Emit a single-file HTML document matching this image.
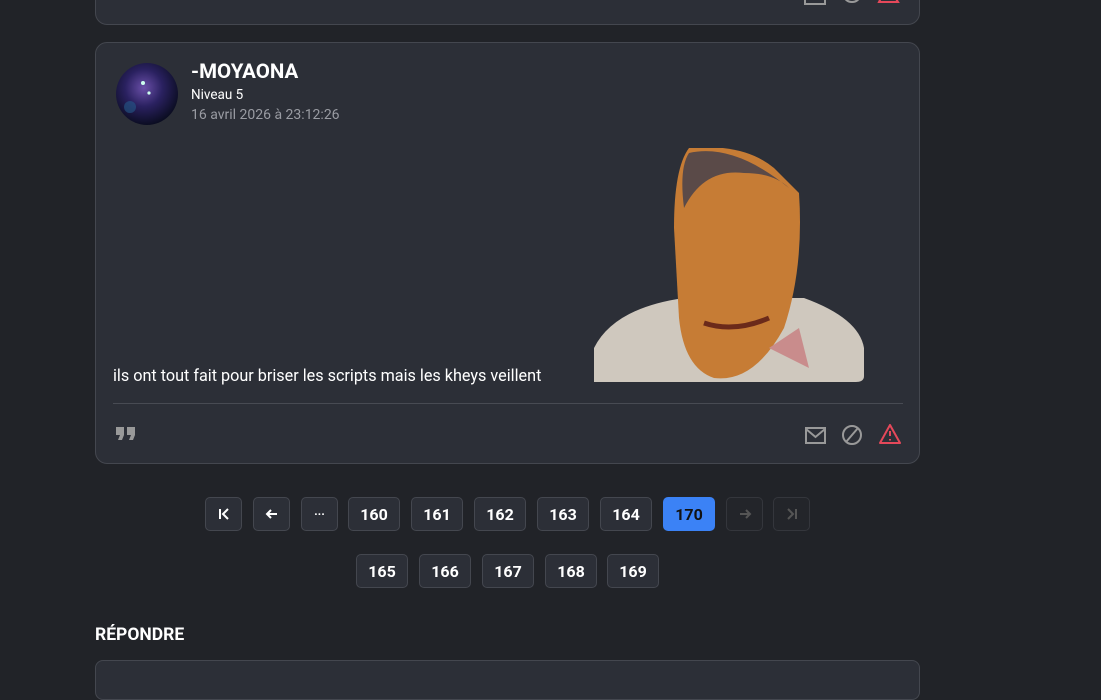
<!DOCTYPE html>
<html><head><meta charset="utf-8"><style>
body{margin:0;width:1101px;height:665px;overflow:hidden;background:#212328;font-family:"Roboto","Liberation Sans",sans-serif;color:#fff;position:relative}
.card{position:absolute;left:95px;width:825px;background:#2c2f37;border:1px solid #44474f;border-radius:12px;box-sizing:border-box}
.pg{position:absolute;height:34px;box-sizing:border-box;border:1px solid #44474f;border-radius:5px;background:#2c2f37;color:#fff;font-weight:bold;font-size:16px;display:flex;align-items:center;justify-content:center}
.dis{background:#23252a;color:#555;border-color:#34363c}
.ic{position:absolute}
</style></head><body>
<div class="card" style="top:-20px;height:45px"></div>
<svg class="ic" style="left:804px;top:-6px" width="100" height="14"><rect x="1" y="0" width="20" height="10" fill="none" stroke="#999" stroke-width="2"/><circle cx="48" cy="-1" r="9" fill="none" stroke="#999" stroke-width="2"/><path d="M79 0 L89 0 L94 8 L75 8 Z" fill="none" stroke="#e5485a" stroke-width="2"/></svg>

<div class="card" style="top:42px;height:422px">
  <svg style="position:absolute;left:20px;top:20px" width="62" height="62"><defs><radialGradient id="g" cx="45%" cy="40%" r="60%"><stop offset="0" stop-color="#6a4fa8"/><stop offset=".5" stop-color="#2a2160"/><stop offset="1" stop-color="#0b0d22"/></radialGradient></defs><circle cx="31" cy="31" r="31" fill="url(#g)"/><circle cx="27" cy="20" r="2" fill="#cfe"/><circle cx="33" cy="30" r="1.6" fill="#cfe"/><circle cx="14" cy="44" r="6" fill="#245a8a" opacity=".6"/></svg>
  <div style="position:absolute;left:95px;top:17px;font-size:20.5px;font-weight:bold">-MOYAONA</div>
  <div style="position:absolute;left:95px;top:44px;font-size:13.5px">Niveau 5</div>
  <div style="position:absolute;left:95px;top:64px;font-size:14px;color:#9a9ca3">16 avril 2026 à 23:12:26</div>
  <svg style="position:absolute;left:498px;top:105px" width="272" height="234"><path d="M0 234 L0 200 Q20 160 90 150 L210 150 Q265 170 270 200 L270 228 Q270 234 262 234 Z" fill="#cfc8be"/><path d="M95 0 Q150 -5 180 20 L205 45 Q210 120 190 180 Q160 235 120 230 Q90 220 85 170 L80 80 Q80 20 95 0 Z" fill="#c67c35"/><path d="M95 5 Q140 -5 195 40 Q180 25 150 25 Q110 20 90 60 Q85 20 95 5Z" fill="#5a4a48"/><path d="M110 175 Q140 185 175 170" stroke="#6b2a1a" stroke-width="5" fill="none"/><path d="M175 200 L205 180 L215 220 Z" fill="#c98c8c"/></svg>
  <div style="position:absolute;left:17px;top:323px;font-size:16.2px">ils ont tout fait pour briser les scripts mais les kheys veillent</div>
  <div style="position:absolute;left:17px;right:16px;top:360px;border-top:1px solid #484b53"></div>
  <svg style="position:absolute;left:19px;top:383px" width="24" height="16"><path d="M1 1 H9 V9 L7 14 H3 L5 9 H1 Z M12 1 H20 V9 L18 14 H14 L16 9 H12 Z" fill="#999"/></svg>
  <svg style="position:absolute;left:708px;top:381px" width="100" height="24"><rect x="2" y="4" width="19" height="15" fill="none" stroke="#999" stroke-width="2"/><path d="M2 5 L11.5 13 L21 5" fill="none" stroke="#999" stroke-width="2"/><ellipse cx="48" cy="11" rx="9" ry="9" fill="none" stroke="#999" stroke-width="2"/><path d="M42 18 L54 4" stroke="#999" stroke-width="2"/><path d="M86 1 L96 19 L76 19 Z" fill="none" stroke="#e5485a" stroke-width="2" stroke-linejoin="round"/><path d="M86 7 L86 12 M86 15 L86 16.5" stroke="#e5485a" stroke-width="2"/></svg>
</div>

<div class="pg" style="left:205px;top:497px;width:37px"><svg width="14" height="14"><path d="M3 2 V12 M11 2 L6 7 L11 12" stroke="#fff" stroke-width="2" fill="none"/></svg></div>
<div class="pg" style="left:253px;top:497px;width:37px"><svg width="14" height="14"><path d="M2 7 H12 M6 3 L2 7 L6 11" stroke="#fff" stroke-width="2" fill="none"/></svg></div>
<div class="pg" style="left:301px;top:497px;width:37px;font-size:12px">···</div>
<div class="pg" style="left:348px;top:497px;width:52px">160</div>
<div class="pg" style="left:411px;top:497px;width:52px">161</div>
<div class="pg" style="left:474px;top:497px;width:52px">162</div>
<div class="pg" style="left:537px;top:497px;width:52px">163</div>
<div class="pg" style="left:600px;top:497px;width:52px">164</div>
<div class="pg" style="left:663px;top:497px;width:52px;background:#3b82f6;border-color:#3b82f6;color:#111">170</div>
<div class="pg dis" style="left:726px;top:497px;width:37px"><svg width="14" height="14"><path d="M2 7 H12 M8 3 L12 7 L8 11" stroke="#555" stroke-width="2" fill="none"/></svg></div>
<div class="pg dis" style="left:773px;top:497px;width:37px"><svg width="14" height="14"><path d="M11 2 V12 M3 2 L8 7 L3 12" stroke="#555" stroke-width="2" fill="none"/></svg></div>

<div class="pg" style="left:356px;top:554px;width:52px">165</div>
<div class="pg" style="left:419px;top:554px;width:52px">166</div>
<div class="pg" style="left:482px;top:554px;width:52px">167</div>
<div class="pg" style="left:545px;top:554px;width:52px">168</div>
<div class="pg" style="left:607px;top:554px;width:52px">169</div>

<div style="position:absolute;left:95px;top:625px;font-size:17.5px;font-weight:bold">RÉPONDRE</div>
<div class="card" style="top:660px;height:40px;border-radius:8px"></div>
</body></html>
